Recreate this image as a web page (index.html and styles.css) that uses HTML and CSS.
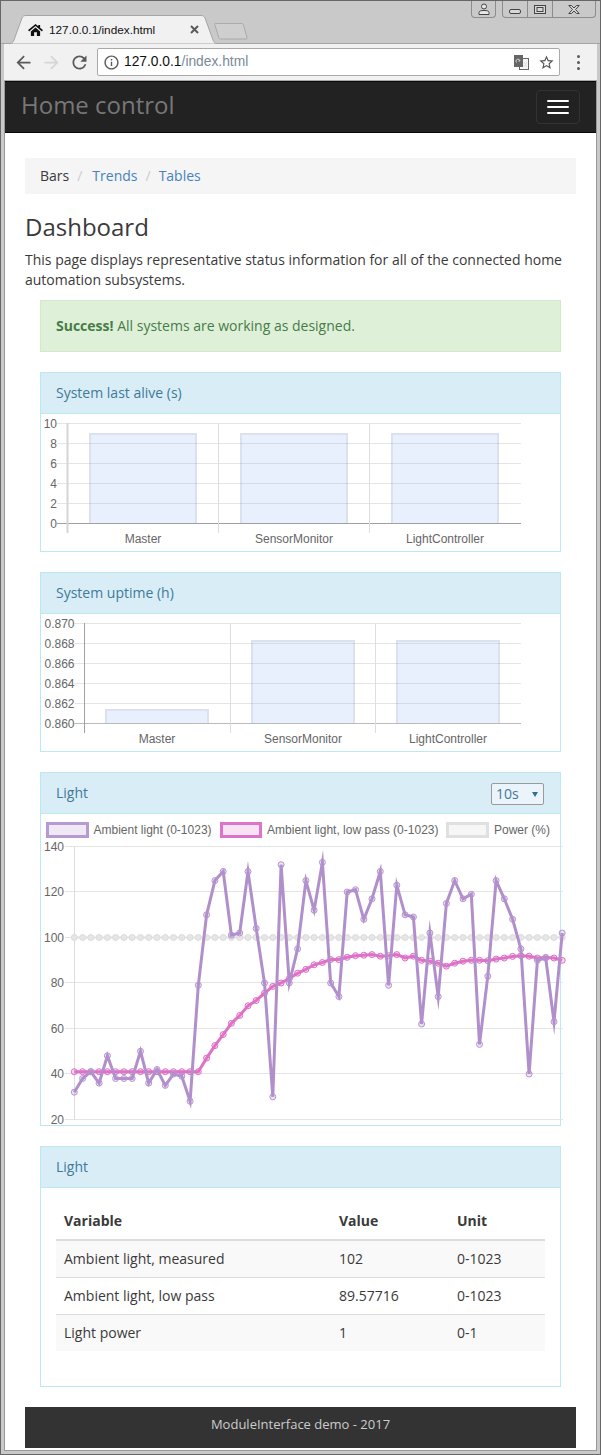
FILE: index.html
```html
<!DOCTYPE html>
<html lang="en">
<head>
<meta charset="UTF-8">
<title>Home control</title>
<link rel="stylesheet" href="styles.css">
<script src="chart.js"></script>
</head>
<body>
<div class="window">
    <div class="tabstrip">
        <div class="tab">
            <svg class="tab-shape" viewBox="0 0 207 29"><path d="M0 28.5C2 28.5 3 27.5 4 25L12 3C13 1.2 14 .5 16 .5H191C193 .5 194 1.2 195 3L203 25C204 27.5 205 28.5 207 28.5"/></svg>
            <svg class="tab-home" viewBox="0 0 16 13"><path d="M8 0L0 6.5 1 8 8 2.3 15 8 16 6.5 13 4V1H11V2.4ZM3 8L8 3.8 13 8V13H9.5V9H6.5V13H3Z"/></svg>
            <span class="tab-title">127.0.0.1/index.html</span>
            <svg class="tab-close" viewBox="0 0 9 9"><path d="M1 1L8 8M8 1L1 8"/></svg>
        </div>
        <svg class="new-tab" viewBox="0 0 36 18" preserveAspectRatio="none"><path d="M1.5 1.5H29C30 1.5 30.5 2 31 2.5L35 15.5C35.3 16.5 35 17 34 17H7C6 17 5.5 16.5 5 15.5L.8 2.5C.5 1.8 .8 1.5 1.5 1.5Z"/></svg>
        <div class="spacer"></div>
        <div class="win-user">
            <svg viewBox="0 0 12 12"><circle cx="6" cy="3.5" r="2.5"/><path d="M1 11.5V9.5C1 8 3 7.5 6 7.5S11 8 11 9.5V11.5Z"/></svg>
        </div>
        <div class="win-buttons">
            <div class="win-btn"><svg viewBox="0 0 12 5"><rect x=".5" y=".5" width="11" height="4" rx="1.5"/></svg></div>
            <div class="win-btn"><svg viewBox="0 0 12 9"><rect x=".5" y=".5" width="11" height="8"/><rect x="3" y="2.5" width="6" height="4"/></svg></div>
            <div class="win-btn win-btn-close"><svg viewBox="0 0 12 9"><path d="M.8 .5H3.5L6 3 8.5 .5H11.2L7.5 4.5 11.2 8.5H8.5L6 6 3.5 8.5H.8L4.5 4.5Z"/></svg></div>
        </div>
    </div>

    <div class="toolbar">
        <div class="nav-btn"><svg class="ic-arrow" viewBox="0 0 24 24"><path d="M20 11H7.83l5.59-5.59L12 4l-8 8 8 8 1.41-1.41L7.83 13H20v-2z"/></svg></div>
        <div class="nav-btn"><svg class="ic-arrow ic-off" viewBox="0 0 24 24"><path d="M4 11h12.17l-5.59-5.59L12 4l8 8-8 8-1.41-1.41L16.17 13H4v-2z"/></svg></div>
        <div class="nav-btn"><svg class="ic-arrow" viewBox="0 0 24 24"><path d="M17.65 6.35A7.958 7.958 0 0 0 12 4c-4.42 0-7.99 3.58-7.99 8s3.57 8 7.99 8c3.73 0 6.84-2.55 7.73-6h-2.08A5.99 5.99 0 0 1 12 18c-3.31 0-6-2.69-6-6s2.69-6 6-6c1.66 0 3.14.69 4.22 1.78L13 11h7V4l-2.35 2.35z"/></svg></div>
        <div class="address">
            <svg class="ic-info" viewBox="0 0 24 24"><path d="M11 7h2v2h-2zm0 4h2v6h-2zm1-9C6.48 2 2 6.48 2 12s4.48 10 10 10 10-4.48 10-10S17.52 2 12 2zm0 18c-4.41 0-8-3.59-8-8s3.59-8 8-8 8 3.59 8 8-3.59 8-8 8z"/></svg>
            <span class="url-host">127.0.0.1</span><span class="url-path">/index.html</span>
            <svg class="ic-translate" viewBox="0 0 15 15"><rect class="tr-back" x="5.5" y="3.5" width="9" height="11"/><rect class="tr-front" x="0" y="0" width="9" height="12"/><path class="tr-mark" d="M2.5 7.5a2 2 0 1 1 3.5-1.5H4.5M10 7l3 5M13 7l-3 5"/></svg>
            <svg class="ic-star" viewBox="0 0 24 24"><path d="M22 9.24l-7.19-.62L12 2 9.19 8.63 2 9.24l5.46 4.73L5.82 21 12 17.27 18.18 21l-1.63-7.03L22 9.24zM12 15.4l-3.76 2.27 1-4.28-3.32-2.88 4.38-.38L12 6.1l1.71 4.04 4.38.38-3.32 2.88 1 4.28L12 15.4z"/></svg>
        </div>
        <div class="menu-dots"><span></span><span></span><span></span></div>
    </div>

    <div class="viewport">
        <nav class="navbar">
            <a class="brand">Home control</a>
            <div class="toggle"><span></span><span></span><span></span></div>
        </nav>

        <div class="container">
            <ol class="breadcrumb">
                <li>Bars</li>
                <li><a>Trends</a></li>
                <li><a>Tables</a></li>
            </ol>

            <h2>Dashboard</h2>
            <p class="intro">This page displays representative status information for all of the connected home automation subsystems.</p>

            <div class="inner">
                <div class="alert"><strong>Success!</strong> All systems are working as designed.</div>

                <div class="panel">
                    <div class="panel-heading">System last alive (s)</div>
                    <svg id="chartAlive" class="chart chart-bar"></svg>
                </div>

                <div class="panel">
                    <div class="panel-heading">System uptime (h)</div>
                    <svg id="chartUptime" class="chart chart-bar"></svg>
                </div>

                <div class="panel">
                    <div class="panel-heading">
                        <span>Light</span>
                        <div class="range">10s<i class="caret"></i></div>
                    </div>
                    <div class="legend">
                        <span class="swatch swatch-ambient"></span><span class="legend-text">Ambient light (0-1023)</span>
                        <span class="swatch swatch-low"></span><span class="legend-text">Ambient light, low pass (0-1023)</span>
                        <span class="swatch swatch-power"></span><span class="legend-text">Power (%)</span>
                    </div>
                    <svg id="chartLight" class="chart chart-line"></svg>
                </div>

                <div class="panel">
                    <div class="panel-heading">Light</div>
                    <div class="panel-body">
                        <table class="table">
                            <thead>
                                <tr><th class="col-name">Variable</th><th class="col-value">Value</th><th>Unit</th></tr>
                            </thead>
                            <tbody>
                                <tr><td>Ambient light, measured</td><td>102</td><td>0-1023</td></tr>
                                <tr><td>Ambient light, low pass</td><td>89.57716</td><td>0-1023</td></tr>
                                <tr><td>Light power</td><td>1</td><td>0-1</td></tr>
                            </tbody>
                        </table>
                    </div>
                </div>
            </div>

            <footer class="footer">ModuleInterface demo - 2017</footer>
        </div>
    </div>
</div>
</body>
</html>
```

FILE: styles.css
```css
*{box-sizing:border-box;margin:0;padding:0;}
html,body{background:#c9c9c9;}
body{font-family:"Open Sans",sans-serif;font-size:14px;line-height:20px;color:#3a3a3a;}
ol{list-style:none;}

/* browser frame */
.window{width:601px;height:1455px;border:1px solid #666;padding-bottom:3px;background:#c9c9c9;display:flex;flex-direction:column;}
.tabstrip{height:43px;flex:none;display:flex;align-items:flex-start;padding-left:9px;padding-right:4px;border-bottom:1px solid #a5a5a5;}
.tab{position:relative;width:207px;height:29px;margin-top:14px;padding:0 18px;display:flex;align-items:center;flex:none;}
.tab-shape{position:absolute;left:0;top:0;width:207px;height:29px;}
.tab-shape path{fill:#f1f1f1;stroke:#a5a5a5;}
.tab-home{position:relative;width:15px;height:12px;fill:#111;flex:none;}
.tab-title{position:relative;margin-left:6px;font-family:"Liberation Sans",sans-serif;font-size:11.8px;color:#111;white-space:nowrap;}
.tab-close{position:relative;width:9px;height:9px;margin-left:auto;stroke:#5a5a5a;stroke-width:2;fill:none;flex:none;}
.new-tab{width:34px;height:18px;margin:21px 0 0 -3px;flex:none;fill:#cfcfcf;stroke:#a8a8a8;}
.spacer{flex:1;}
.win-user{width:25px;height:17px;border:1px solid #8c8c8c;border-top:0;border-radius:0 0 4px 4px;display:flex;align-items:center;justify-content:center;margin-right:6px;}
.win-user svg{width:12px;height:12px;fill:#e8e8e8;stroke:#444;}
.win-buttons{display:flex;height:17px;border:1px solid #8c8c8c;border-top:0;border-radius:0 0 4px 4px;}
.win-btn{width:25px;display:flex;align-items:center;justify-content:center;border-right:1px solid #8c8c8c;}
.win-btn svg{width:12px;height:9px;fill:#d8d8d8;stroke:#444;}
.win-btn-close{width:42px;border-right:0;}
.win-btn-close svg{width:12px;}
.win-buttons .win-btn:first-child svg{height:5px;margin-top:5px;}

.toolbar{height:37px;flex:none;margin:0 3px;display:flex;align-items:center;background:#f1f1f1;border-bottom:1px solid #aaa;padding-left:5px;}
.nav-btn{width:28px;height:28px;display:flex;align-items:center;justify-content:center;}
.ic-arrow{width:21px;height:21px;fill:#5a5a5a;}
.ic-off{fill:#d6d6d6;}
.address{flex:1;height:28px;margin-left:4px;padding:0 5px;display:flex;align-items:center;background:#fff;border:1px solid #a9a9a9;border-radius:2px;font-family:"Liberation Sans",sans-serif;font-size:13.8px;}
.ic-info{width:17px;height:17px;fill:#5a5a5a;flex:none;margin-right:4px;}
.url-host{color:#111;}
.url-path{color:#7a8a9a;}
.ic-translate{width:15px;height:15px;margin-left:auto;flex:none;}
.tr-back{fill:#f4f4f4;stroke:#666;}
.tr-front{fill:#666;}
.tr-mark{fill:none;stroke:#ddd;stroke-width:1;}
.ic-star{width:17px;height:17px;margin:0 -1px 0 9px;fill:#555;flex:none;}
.menu-dots{width:37px;display:flex;flex-direction:column;align-items:center;gap:3px;}
.menu-dots span{width:3px;height:3px;border-radius:50%;background:#5a5a5a;}

/* page */
.viewport{flex:1;margin:0 3px;background:#fff;border:1px solid #999;border-top:0;}
.navbar{height:52px;display:flex;justify-content:space-between;background:#222;border:1px solid #080808;border-width:1px 0;padding:0 16px 0 16px;}
.brand{font-size:24px;line-height:46px;color:#777;}
.toggle{width:44px;height:34px;margin-top:8px;padding:9px 10px;border:1px solid #333;border-radius:4px;display:flex;flex-direction:column;gap:4px;}
.toggle span{height:2px;background:#fff;border-radius:1px;}

.container{padding:25px 20px 0;}
.breadcrumb{display:flex;padding:8px 15px;background:#f5f5f5;border-radius:0;}
.breadcrumb li+li:before{content:"/";padding:0 8px;color:#ccc;}
.breadcrumb li:nth-child(2) a{margin-left:2px;}
.breadcrumb a{color:#4682c0;}
h2{font-size:24px;font-weight:400;line-height:26px;margin:20px 0 10px;}
.intro{margin-bottom:10px;}
.inner{padding:0 15px;}

.alert{padding:15px;margin-bottom:20px;background:#dff0d8;border:1px solid #d6e9c6;color:#467c48;}
.panel{margin-bottom:20px;background:#fff;border:1px solid #bce8f1;}
.panel-heading{height:41px;padding:10px 15px;display:flex;justify-content:space-between;background:#d9edf7;border-bottom:1px solid #bce8f1;color:#3f7a98;}
.panel-body{padding:15px;}
.range{width:53px;height:22px;margin-right:1px;padding:0 0 0 4px;display:flex;align-items:center;justify-content:space-between;background:#eaf4fa;border:1px solid #9a9a9a;border-radius:2px;color:#3f7a98;}
.caret{width:0;height:0;margin-right:5px;border:3px solid transparent;border-top:5px solid #2f6f8f;border-bottom:0;}

.chart{display:block;overflow:visible;font-family:"Liberation Sans",sans-serif;font-size:12px;}
.chart-bar{width:519px;height:137px;}
.chart-line{width:519px;height:287px;}
.chart text{fill:#666;}
.grid{stroke:#e5e5e5;stroke-width:1;}
.axis{stroke:#ddd;stroke-width:1;}
.axis-wide{stroke:#d4d4d4;stroke-width:2;}
.axis-soft{stroke:#bbb;stroke-width:1;}
.axis-strong{stroke:#a0a0a0;stroke-width:1;}
.bar{fill:rgba(140,180,245,.2);}
.bar-edge{fill:none;stroke:rgba(128,128,128,.13);stroke-width:2;}
.tick-end{text-anchor:end;}
.tick-mid{text-anchor:middle;}

.line{fill:none;stroke-width:3;stroke-miterlimit:10;stroke-linejoin:miter;}
.dot{stroke-width:1;}
.line-ambient{stroke:#b08fcb;}
.dot-ambient{stroke:#b794d2;fill:rgba(176,143,203,.25);}
.line-low{stroke:#df72c9;}
.dot-low{stroke:#de6fc8;fill:rgba(223,114,201,.25);}
.line-power{stroke:#e2e2e2;stroke-width:2;}
.dot-power{stroke:#dcdcdc;fill:#e6e6e6;}

.legend{height:24px;padding:8px 0 0 5px;display:flex;font-family:"Liberation Sans",sans-serif;font-size:12px;line-height:16px;color:#666;}
.swatch{width:42.5px;height:16px;margin-right:5px;border:3px solid;}
.legend-text{margin-right:8px;white-space:nowrap;}
.swatch-ambient{border-color:#b69ad1;background:#efe8f5;}
.swatch-low{border-color:#df72c9;background:#f8e3f5;}
.swatch-power{border-color:#e0e0e0;background:#f6f6f6;}

.table{width:100%;border-collapse:collapse;table-layout:fixed;margin-bottom:20px;}
.table th,.table td{padding:8px;text-align:left;}
.table th{border-bottom:2px solid #ddd;font-weight:700;}
.table td{border-top:1px solid #ddd;}
.table thead+tbody tr:first-child td{border-top:0;}
.table tbody tr:nth-child(odd){background:#f9f9f9;}
.col-name{width:275px;}
.col-value{width:118px;}

.footer{height:41px;padding-top:7px;background:#333;color:#ccc;font-size:13px;text-align:center;}
```

FILE: chart.js
```js
var NS='http://www.w3.org/2000/svg';

function add(parent,tag,attrs,text){
    var el=document.createElementNS(NS,tag);
    for(var k in attrs){
        el.setAttribute(k,attrs[k]);
    }
    if(text!==undefined){
        el.textContent=text;
    }
    parent.appendChild(el);
    return el;
}

function hLine(svg,cls,x1,x2,y){
    add(svg,'line',{'class':cls,x1:x1,x2:x2,y1:y,y2:y});
}

function vLine(svg,cls,x,y1,y2){
    add(svg,'line',{'class':cls,x1:x,x2:x,y1:y1,y2:y2});
}

// all coordinates below are page pixels, the viewBox maps them
function barChart(id,o){
    var svg=document.getElementById(id);
    svg.setAttribute('viewBox','41 '+o.boxTop+' 519 137');
    var n=o.ticks.length-1;
    var i;
    for(i=0;i<=n;i++){
        var y=o.top+20*i+0.5;
        hLine(svg,i==n?o.zeroCls:'grid',o.left-10,o.right,y);
        add(svg,'text',{'class':'tick-end',x:o.left-10,y:y+4},o.ticks[i]);
    }
    var w=(o.right-o.left)/3;
    vLine(svg,o.axisCls,Math.floor(o.left)+0.5,o.top,o.top+110);
    for(i=1;i<3;i++){
        vLine(svg,'axis',Math.floor(o.left+w*i)+0.5,o.top,o.top+110);
    }
    for(i=0;i<3;i++){
        var b=o.bars[i];
        var bottom=o.top+100;
        add(svg,'rect',{'class':'bar',x:b[0],y:b[2],width:b[1]-b[0],height:bottom-b[2]});
        add(svg,'path',{'class':'bar-edge',d:'M'+(b[0]+1)+' '+bottom+'V'+(b[2]+1)+'H'+(b[1]-1)+'V'+bottom});
        add(svg,'text',{'class':'tick-mid',x:(b[0]+b[1])/2,y:o.top+120},o.names[i]);
    }
}

function lineChart(id){
    var ambient=[32,38,41,36,48,38,38,38,50,36,42,35,40,39,28,79,110,125,129,101,102,129,104,80,30,132,80,95,125,112,133,80,74,120,121,108,117,129,79,123,110,109,62,102,74,115,125,117,119,53,83,125,117,108,95,40,90,91,63,102];
    var low=[41,41,41,41,41,41,41,41,41,41,41,41,41,41,41,41,47,52.5,57.3,62.3,65.7,70,72.3,75.5,78.5,80,82,84.3,86,88,89,90.3,90.3,91.3,92,92.2,92.5,91.8,92,92.5,91,91.8,90,89.6,88.7,87.4,88.7,89.6,90,90,89.8,90.5,91,91.7,92,91.8,91,91.2,91,90];
    var power=[];
    for(var p=0;p<60;p++){
        power.push(100);
    }

    var svg=document.getElementById(id);
    svg.setAttribute('viewBox','41 838 519 287');

    var i;
    for(i=0;i<=6;i++){
        var gy=Math.floor(846+45.5*i)+0.5;
        hLine(svg,'grid',65,563,gy);
        add(svg,'text',{'class':'tick-end',x:64,y:gy+4},140-20*i);
    }
    vLine(svg,'axis',74.5,846,1120);

    series(svg,power,'power');
    series(svg,low,'low');
    series(svg,ambient,'ambient');
}

function series(svg,data,name){
    var pts=[];
    for(var i=0;i<data.length;i++){
        var x=74.3+i*8.27;
        var y=846.5+(140-data[i])*2.275;
        pts.push(x.toFixed(1)+','+y.toFixed(1));
    }
    add(svg,'polyline',{'class':'line line-'+name,points:pts.join(' ')});
    for(var j=0;j<pts.length;j++){
        var xy=pts[j].split(',');
        add(svg,'circle',{'class':'dot dot-'+name,cx:xy[0],cy:xy[1],r:3});
    }
}

window.onload=function(){
    var names=['Master','SensorMonitor','LightController'];
    barChart('chartAlive',{
        boxTop:414,left:67,right:521,top:423,
        zeroCls:'axis-strong',axisCls:'axis-wide',
        ticks:['10','8','6','4','2','0'],
        names:names,
        bars:[[89,197,433],[240,348,433],[391,499,433]]
    });
    barChart('chartUptime',{
        boxTop:614,left:84.5,right:521,top:623,
        zeroCls:'axis-soft',axisCls:'axis-strong',
        ticks:['0.870','0.868','0.866','0.864','0.862','0.860'],
        names:names,
        bars:[[105,209,709],[251,355,640],[396,500,640]]
    });
    lineChart('chartLight');
};
```
